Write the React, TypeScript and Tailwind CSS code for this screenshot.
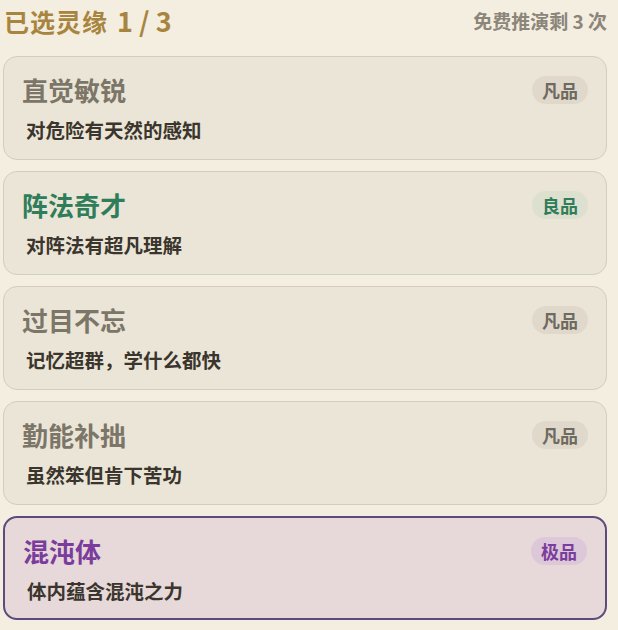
import React from "react";

type Tone = "gray" | "green" | "purple";

const items: { title: string; desc: string; grade: string; tone: Tone }[] = [
  { title: "直觉敏锐", desc: "对危险有天然的感知", grade: "凡品", tone: "gray" },
  { title: "阵法奇才", desc: "对阵法有超凡理解", grade: "良品", tone: "green" },
  { title: "过目不忘", desc: "记忆超群，学什么都快", grade: "凡品", tone: "gray" },
  { title: "勤能补拙", desc: "虽然笨但肯下苦功", grade: "凡品", tone: "gray" },
  { title: "混沌体", desc: "体内蕴含混沌之力", grade: "极品", tone: "purple" },
];

const cardCls: Record<Tone, string> = {
  gray: "border-[#d4cdbc] bg-[#ebe5d7]",
  green: "border-[#cfcfbd] bg-[#ebe5d7]",
  purple: "border-[#5f4a7c] bg-[#e7d8da]",
};
const titleCls: Record<Tone, string> = {
  gray: "text-[#7c7669]",
  green: "text-[#2f7d5a]",
  purple: "text-[#7a3d9c]",
};
const badgeCls: Record<Tone, string> = {
  gray: "bg-[#e0d9cb] text-[#6e6a60]",
  green: "bg-[#dde0cf] text-[#2f7d5a]",
  purple: "bg-[#dcc8d8] text-[#7a3d9c]",
};

export default function App() {
  return (
    <div
      className="h-[630px] overflow-hidden bg-[#f4eee1] pl-[3px] pr-[11px]"
      style={{ fontFamily: '"Noto Sans CJK SC", "Noto Sans", sans-serif' }}
    >
      <div className="flex h-[40px] items-center justify-between pl-[1px]">
        <div className="flex items-baseline text-[25px] font-bold leading-none text-[#a8853e]">
          <span className="tracking-[1px]">已选灵缘</span>
          <span className="ml-[9px] text-[27px]">1 / 3</span>
        </div>
        <div className="text-[19px] font-bold leading-none text-[#8b857a]">免费推演剩 3 次</div>
      </div>
      <div className="mt-[16px] flex flex-col gap-[11px]">
        {items.map((it, i) => (
          <div
            key={i}
            className={`h-[104px] shrink-0 rounded-[14px] px-[18px] pt-[16px] ${
              it.tone === "purple" ? "border-2" : "border-[1.5px]"
            } ${cardCls[it.tone]}`}
          >
            <div className="flex items-center justify-between">
              <div className={`text-[26px] font-bold leading-[34px] ${titleCls[it.tone]}`}>{it.title}</div>
              <div
                className={`flex h-[28px] items-center rounded-full px-[10px] text-[18px] font-bold ${badgeCls[it.tone]}`}
              >
                {it.grade}
              </div>
            </div>
            <div className="mt-[10px] pl-[4px] text-[19.5px] font-bold leading-[25px] text-[#3a352d]">{it.desc}</div>
          </div>
        ))}
        <div className="h-[104px] shrink-0 rounded-[14px] border-[1.5px] border-[#d4cdbc] bg-[#ebe5d7]" />
      </div>
    </div>
  );
}
